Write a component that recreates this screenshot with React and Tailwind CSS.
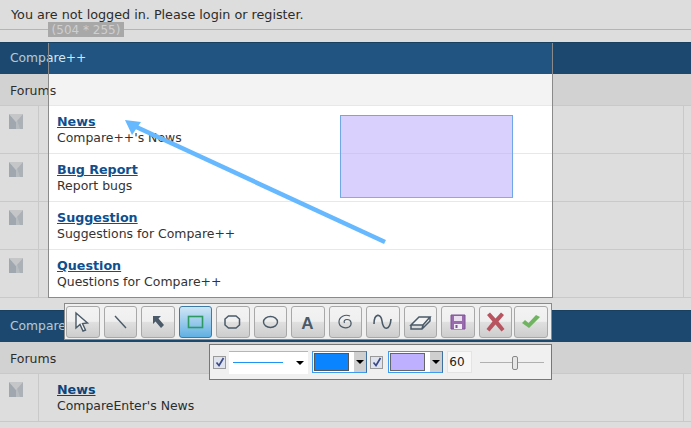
const forums = [
  { title: 'News', desc: "Compare++'s News" },
  { title: 'Bug Report', desc: 'Report bugs' },
  { title: 'Suggestion', desc: 'Suggestions for Compare++' },
  { title: 'Question', desc: 'Questions for Compare++' },
];

function MailIcon() {
  return (
    <svg width="14" height="15" viewBox="0 0 14 15">
      <rect width="14" height="15" fill="#d4d9de" />
      <path d="M0 0 L7 8 V15 H0 Z" fill="#b9c1c9" />
      <path d="M14 0 L8 6 L11 15 H14 Z" fill="#c6cdd3" />
      <path d="M0 0 H14 L7 8 Z" fill="#e3e5e7" />
    </svg>
  );
}

function Section({ title, items }) {
  return (
    <section>
      <div className="h-8 border-t border-[#1b4a70] bg-[#215480] px-2.5 text-[12.3px] leading-[31px] text-[#d5e6f3]">{title}</div>
      <div className="h-[31px] bg-[#f3f3f3] px-2.5 text-[12.5px] leading-[33px] text-[#333]">Forums</div>
      {items.map((item) => (
        <div key={item.title} className="flex h-12 border-t border-[#e8e8e8] last:h-[49px] last:border-b">
          <div className="w-[39px] shrink-0 border-r border-[#e8e8e8] pl-[9px] pt-[8px]">
            <MailIcon />
          </div>
          <div className="flex-1 border-r border-[#e8e8e8] pl-[18px] pt-[8px] text-[12.45px] leading-[16px] text-[#333]">
            <a className="block text-[12.7px] font-bold text-[#0d4f8f] underline">{item.title}</a>
            <p>{item.desc}</p>
          </div>
          <div className="w-[7px] shrink-0" />
        </div>
      ))}
    </section>
  );
}

function ToolIcon({ name }) {
  const dark = '#4a5a68';
  switch (name) {
    case 'select':
      return <path d="M7 4 L7 19 L11 15.5 L14 22 L16.5 21 L13.5 14.5 L18.5 14 Z" fill="#f4f4f4" stroke={dark} strokeWidth="1.4" />;
    case 'line':
      return <path d="M8 7 L19 19" stroke={dark} strokeWidth="1.4" fill="none" />;
    case 'arrow':
      return <path d="M9 7 H17 L14.5 9.5 L20 16 L17 19 L11.5 12.5 L9 15 Z" fill={dark} />;
    case 'rect':
      return <rect x="6.5" y="7.5" width="14" height="11" fill="none" stroke="#2e9a62" strokeWidth="1.6" />;
    case 'round':
      return <path d="M9.5 7 H17 L20.5 10 V16 L17 19 H9.5 L6 16 V10 Z" fill="none" stroke={dark} strokeWidth="1.5" />;
    case 'ellipse':
      return <ellipse cx="13.5" cy="13" rx="7" ry="5.5" fill="none" stroke={dark} strokeWidth="1.4" />;
    case 'text':
      return <text x="13.5" y="19.5" textAnchor="middle" fontSize="17" fontWeight="700" fill={dark} fontFamily="'Liberation Sans', sans-serif">A</text>;
    case 'spiral':
      return <path d="M18 7 C13 5 7 7.5 7 13 C7 18 13 20 17 18 C20.5 15.5 19.5 10.5 15 10.5 C12.5 10.5 11.5 12.5 12.5 14" fill="none" stroke={dark} strokeWidth="1.2" />;
    case 'curve':
      return <path d="M5 15 C5 4 12 4 13 12 C14 22 21 22 22 10" fill="none" stroke={dark} strokeWidth="1.6" />;
    case 'eraser':
      return (
        <g fill="none" stroke={dark} strokeWidth="1.5">
          <path d="M4 16 L12 8 H23 L16 16 Z" fill="#f3f3f3" />
          <path d="M4 16 V20 H15 L23 12 V8 M16 16 L15 20" />
        </g>
      );
    case 'save':
      return (
        <g>
          <path d="M7 6 H21 V20 H7 Z" fill="#9b6bb0" stroke="#7d5295" strokeWidth="1" />
          <rect x="10" y="7" width="8" height="5" fill="#e9dff0" />
          <rect x="10" y="15" width="8" height="5" fill="#f2ecf5" />
          <rect x="11.5" y="16" width="2" height="3" fill="#7d5295" />
        </g>
      );
    case 'cancel':
      return <path d="M5 6 L8 3.5 L13.5 9.5 L19 3.5 L22 6 L16.5 12.5 L22.5 20 L19.5 22.5 L13.5 15.5 L7.5 22.5 L4.5 20 L10.5 12.5 Z" fill="#b8545f" />;
    case 'ok':
      return <path d="M5 14 L8 11 L11.5 14 L19 6 L23 8 L12 19 Z" fill="#6fb560" />;
    default:
      return null;
  }
}

const tools = ['select', 'line', 'arrow', 'rect', 'round', 'ellipse', 'text', 'spiral', 'curve', 'eraser', 'save', 'cancel', 'ok'];

function ToolButton({ name }) {
  const active = name === 'rect';
  return (
    <button
      className={
        active
          ? 'flex h-[32px] w-[33.5px] items-center justify-center rounded-[3px] border border-[#3b7ba6] bg-gradient-to-b from-[#cfe6f5] to-[#5fb0e2]'
          : 'flex h-[32px] w-[33.5px] items-center justify-center rounded-[3px] border border-[#a8a8a8] bg-[linear-gradient(#f3f3f3_0%,#efefef_48%,#e0e0e0_50%,#cdcdcd_100%)]'
      }
    >
      <svg width="27" height="26" viewBox="0 0 27 26">
        <ToolIcon name={name} />
      </svg>
    </button>
  );
}

function Check() {
  return (
    <span className="flex h-[13px] w-[13px] shrink-0 items-center justify-center border border-[#9a9a9a] bg-[#dfe3ee]">
      <svg width="10" height="10" viewBox="0 0 10 10">
        <path d="M1.5 5.5 L4 8.5 L8.5 1" fill="none" stroke="#3b4a86" strokeWidth="1.7" />
      </svg>
    </span>
  );
}

function ColorPicker({ color }) {
  return (
    <div className="flex h-[22px] w-[55px] shrink-0 items-center border border-[#3d9bf0] border-r-[#3f6f9f] bg-white pl-px">
      <span className={color === 'blue' ? 'h-[18px] w-[35px] border border-[#555] bg-[#0a84ff]' : 'h-[18px] w-[35px] border border-[#666] bg-[#bfb0ff]'} />
      <span className="ml-[5px] flex h-[20px] w-[12px] items-center justify-center bg-[#cfcfcf]">
        <span className="h-0 w-0 border-x-[4px] border-t-[4px] border-x-transparent border-t-black" />
      </span>
    </div>
  );
}

export default function App() {
  return (
    <div className="relative h-[428px] w-full overflow-hidden bg-white font-['DejaVu_Sans',Verdana,sans-serif] text-[13px]">
      <div className="h-[30px] border-b border-[#d0d0d0] bg-white pl-[11px] pt-[7px] text-[12.75px] leading-[16px] text-[#333]">
        You are not logged in. Please login or register.
      </div>
      <div className="h-3" />
      <Section title="Compare++" items={forums} />
      <div className="h-3" />
      <Section title="CompareEnter" items={[{ title: 'News', desc: "CompareEnter's News" }]} />

      {/* capture selection, dims everything around it */}
      <div className="absolute left-[48px] top-[43px] h-[255px] w-[505px] border-x border-b border-[#8a8a8a] shadow-[0_0_0_900px_rgba(0,0,0,0.133)]" />

      <div className="absolute left-[48px] top-[22px] flex h-[15px] w-[76px] items-center justify-center bg-[#a8a8a8] text-[12px] text-[#cfcfcf]">
        (504 * 255)
      </div>

      <div className="absolute left-[340px] top-[115px] h-[83px] w-[173px] border border-[#6fa8e6] border-b-[#e08a9c] bg-[#b9a9fb]/55" />

      <svg className="absolute left-0 top-0" width="691" height="428" viewBox="0 0 691 428">
        <line x1="385" y1="242" x2="132" y2="125" stroke="#66b8ff" strokeWidth="4.5" />
        <polygon points="125,120 141,122 132,135" fill="#66b8ff" />
      </svg>

      <div className="absolute left-[64px] top-[303px] flex h-[37px] w-[488px] items-center gap-1 border border-[#8a8a8a] bg-[#f0f0f0] pl-px">
        {tools.map((name) => (
          <div key={name} className={name === 'ok' ? '-ml-[2px]' : ''}>
            <ToolButton name={name} />
          </div>
        ))}
      </div>

      <div className="absolute left-[209px] top-[344px] flex h-[36px] w-[343px] items-center border border-[#777] bg-[#f0f0f0] pl-[3px]">
        <Check />
        <div className="ml-[3px] flex h-[23px] w-[79px] shrink-0 items-center border-t border-[#b5b5b5] bg-white pl-[4px]">
          <span className="h-px w-[50px] bg-[#1e95f5]" />
          <span className="ml-[13px] h-0 w-0 border-x-[4px] border-t-[4px] border-x-transparent border-t-black" />
        </div>
        <div className="ml-[4px]">
          <ColorPicker color="blue" />
        </div>
        <div className="ml-[3px]">
          <Check />
        </div>
        <div className="ml-[5px]">
          <ColorPicker color="purple" />
        </div>
        <div className="ml-[4px] flex h-[22px] w-[25px] shrink-0 items-center justify-center border border-[#e4e4e4] bg-[#f7f7f7] pr-[5px] text-[12px] leading-none text-[#222]">
          60
        </div>
        <div className="relative ml-[8px] h-px w-[64px] shrink-0 bg-[#b0b0b0]">
          <span className="absolute left-[32px] top-[-6px] h-[14px] w-[6px] rounded-[2px] border border-[#888] bg-[#e6e6e6]" />
        </div>
      </div>
    </div>
  );
}
